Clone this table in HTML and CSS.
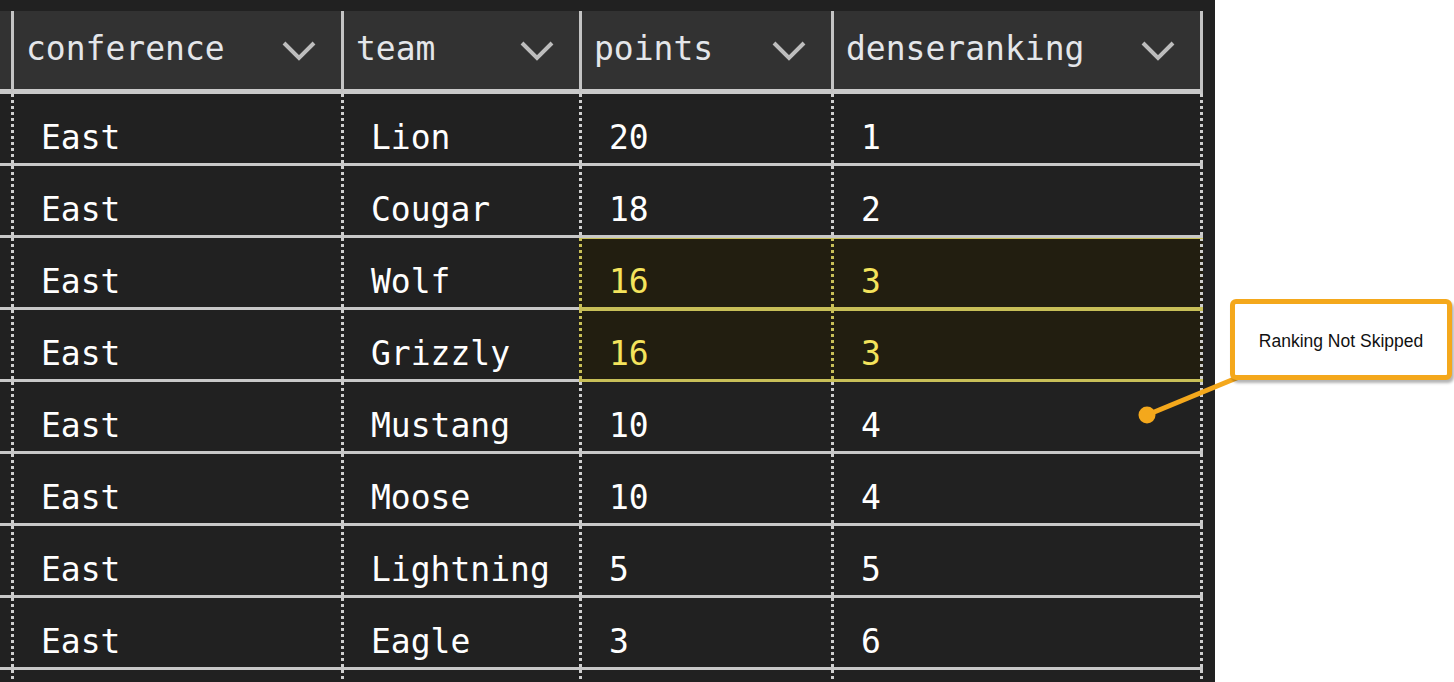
FILE: index.html
```html
<!DOCTYPE html>
<html lang="en">
<head>
<meta charset="utf-8">
<title>Dense ranking</title>
<link rel="stylesheet" href="styles.css">
</head>
<body>
<div class="page">
  <div class="panel">
    <div class="table">
      <div class="hcell edge"></div>
      <div class="hcell"><span>conference</span><svg class="chev" viewBox="0 0 34 20"><polyline points="2,2 17,17 32,2"/></svg></div>
      <div class="hcell"><span>team</span><svg class="chev" viewBox="0 0 34 20"><polyline points="2,2 17,17 32,2"/></svg></div>
      <div class="hcell"><span>points</span><svg class="chev" viewBox="0 0 34 20"><polyline points="2,2 17,17 32,2"/></svg></div>
      <div class="hcell last"><span>denseranking</span><svg class="chev" viewBox="0 0 34 20"><polyline points="2,2 17,17 32,2"/></svg></div>

      <div class="cell edge"></div><div class="cell">East</div><div class="cell">Lion</div><div class="cell">20</div><div class="cell last">1</div>
      <div class="cell edge"></div><div class="cell">East</div><div class="cell">Cougar</div><div class="cell">18</div><div class="cell last">2</div>
      <div class="cell edge"></div><div class="cell">East</div><div class="cell">Wolf</div><div class="cell hl">16</div><div class="cell hl last">3</div>
      <div class="cell edge"></div><div class="cell">East</div><div class="cell">Grizzly</div><div class="cell hl">16</div><div class="cell hl last">3</div>
      <div class="cell edge"></div><div class="cell">East</div><div class="cell">Mustang</div><div class="cell">10</div><div class="cell last">4</div>
      <div class="cell edge"></div><div class="cell">East</div><div class="cell">Moose</div><div class="cell">10</div><div class="cell last">4</div>
      <div class="cell edge"></div><div class="cell">East</div><div class="cell">Lightning</div><div class="cell">5</div><div class="cell last">5</div>
      <div class="cell edge"></div><div class="cell">East</div><div class="cell">Eagle</div><div class="cell">3</div><div class="cell last">6</div>
      <div class="cell edge"></div><div class="cell"></div><div class="cell"></div><div class="cell"></div><div class="cell last"></div>
    </div>
  </div>

  <svg class="connector" viewBox="0 0 110 60" width="110" height="60">
    <line x1="12" y1="45" x2="104" y2="7"/>
    <circle cx="12" cy="45" r="8.5"/>
  </svg>
  <div class="callout">Ranking Not Skipped</div>
</div>
</body>
</html>
```
FILE: styles.css
```css
html, body {
  margin: 0;
  padding: 0;
  background: #ffffff;
}

.page {
  position: relative;
  width: 1454px;
  height: 682px;
  overflow: hidden;
}

.panel {
  width: 1215px;
  height: 682px;
  background: #212121;
  padding-top: 11px;
  box-sizing: border-box;
  overflow: hidden;
}

.table {
  display: grid;
  grid-template-columns: 11px 330px 238px 252px 372px;
  font-family: "DejaVu Sans Mono", "Liberation Mono", monospace;
  font-size: 33px;
  line-height: 33px;
}

.hcell {
  height: 83px;
  box-sizing: border-box;
  background: #323232;
  border-bottom: 5px solid #c9c9c9;
  border-left: 3px solid #c4c4c4;
  display: flex;
  align-items: center;
  justify-content: space-between;
  padding: 0 25px 4px 12px;
  color: #e4e6ea;
}

.hcell.edge {
  border-left: none;
  padding: 0;
}

.hcell.last {
  border-right: 3px solid #c4c4c4;
}

.chev {
  width: 34px;
  height: 20px;
  margin-top: 6px;
  flex: none;
}

.chev polyline {
  fill: none;
  stroke: #bdbdbd;
  stroke-width: 4;
  stroke-linecap: butt;
  stroke-linejoin: miter;
}

.cell {
  height: 72px;
  box-sizing: border-box;
  border-bottom: 3px solid #c8c8c8;
  padding: 27px 0 0 30px;
  color: #ffffff;
  white-space: nowrap;
  background: linear-gradient(#cfcfcf 50%, transparent 50%) left top / 3px 6px repeat-y;
}

.cell.edge {
  background: none;
  padding: 0;
}

.cell.last {
  background:
    linear-gradient(#cfcfcf 50%, transparent 50%) left top / 3px 6px repeat-y,
    linear-gradient(#cfcfcf 50%, transparent 50%) right top / 3px 6px repeat-y;
}

.cell.hl {
  color: #f4e35c;
  background:
    linear-gradient(#c8bf58 50%, transparent 50%) left top / 3px 6px repeat-y,
    #221e10;
  border-bottom-color: #c8bf58;
  box-shadow: inset 0 1px 0 #c8bf58;
}

.cell.hl.last {
  background:
    linear-gradient(#c8bf58 50%, transparent 50%) left top / 3px 6px repeat-y,
    linear-gradient(#cfcfcf 50%, transparent 50%) right top / 3px 6px repeat-y,
    #221e10;
}

.connector {
  position: absolute;
  left: 1135px;
  top: 370px;
}

.connector line {
  stroke: #f4a81c;
  stroke-width: 5;
}

.connector circle {
  fill: #f4a81c;
}

.callout {
  position: absolute;
  left: 1230px;
  top: 299px;
  width: 222px;
  height: 81px;
  box-sizing: border-box;
  background: #ffffff;
  border: 5px solid #f4a81c;
  border-radius: 6px;
  box-shadow: 2px 3px 3px rgba(0, 0, 0, 0.3);
  display: flex;
  align-items: center;
  justify-content: center;
  font-family: "Liberation Sans", Arial, sans-serif;
  font-size: 17.5px;
  color: #111111;
  padding-top: 3px;
}
```
